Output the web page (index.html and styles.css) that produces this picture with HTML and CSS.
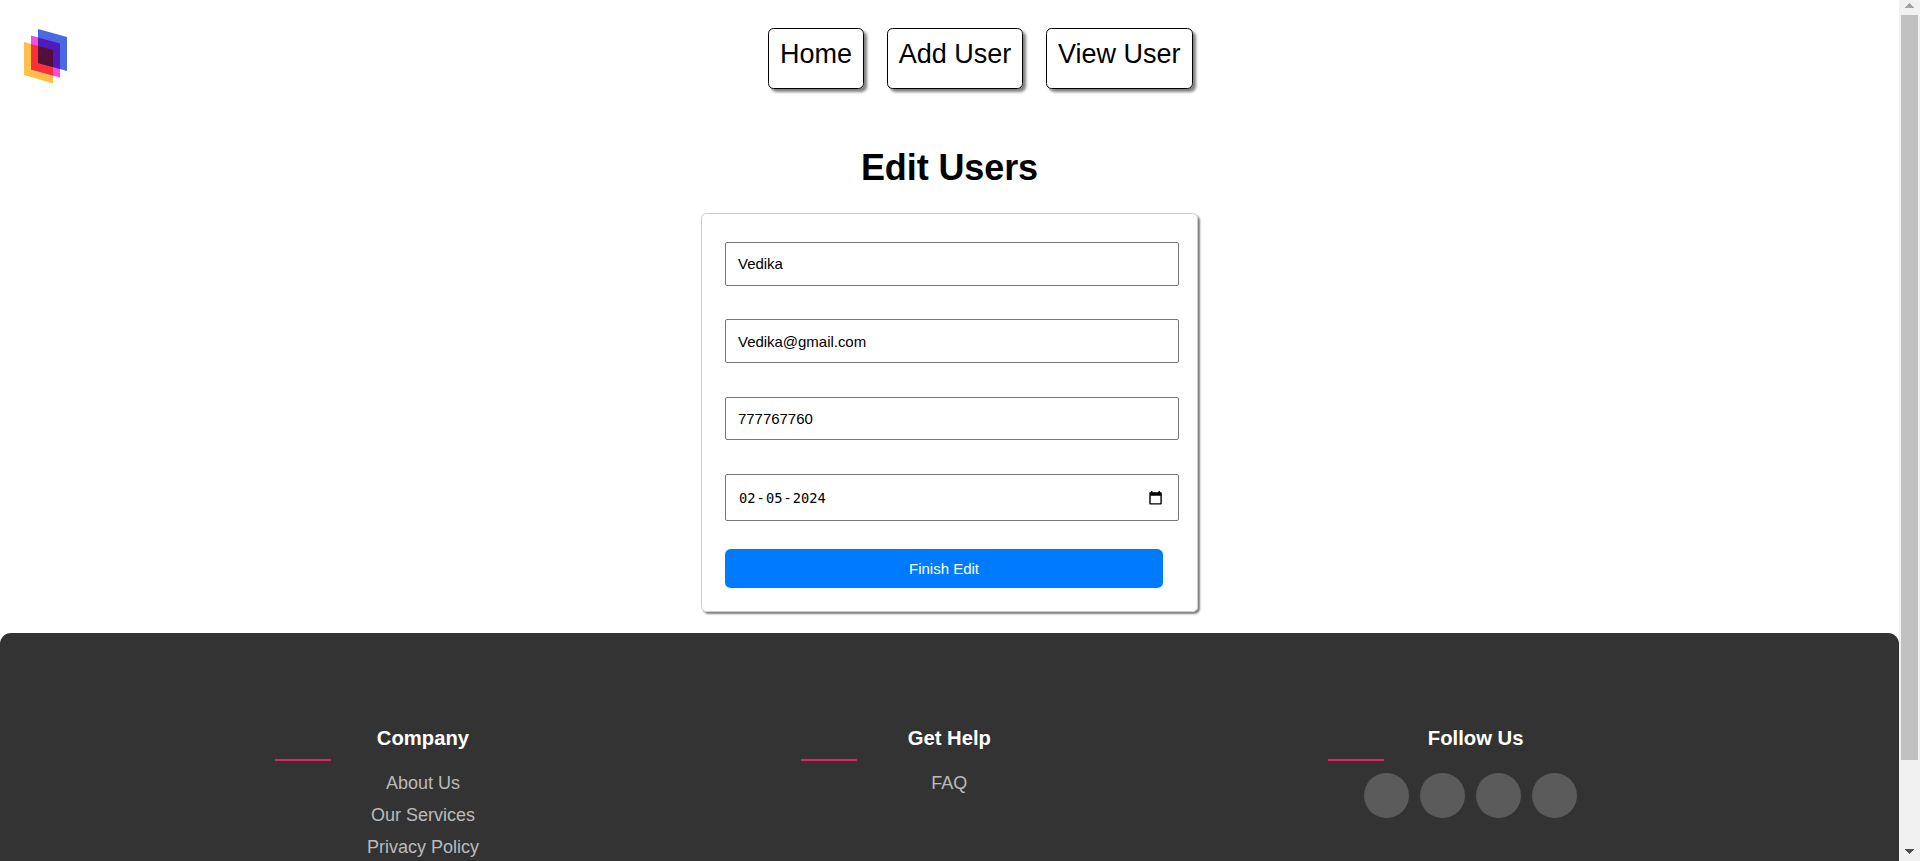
FILE: index.html
```html
<!DOCTYPE html>
<html lang="en">
<head>
<meta charset="utf-8">
<title>Edit Users</title>
<link rel="stylesheet" href="styles.css">
</head>
<body>
<div class="page">
  <header class="header">
    <svg class="logo" width="45" height="56" viewBox="23 28 45 56">
      <path fill="#ffc04a" d="M24 42l29 8v33.5l-29-8.5z"/>
      <path fill="#f84be0" d="M31 35.5l29 8v34l-29-8z"/>
      <path fill="#4a68e2" d="M38 29l29 8v34l-29-8z"/>
      <path fill="#f9303a" d="M31 43.9l22 6.1v25.6l-22-6.1z"/>
      <path fill="#5318b8" d="M38 37.4l22 6.1v25.6l-22-6.1z"/>
      <path fill="#501038" d="M38 45.9l15 4.1v17.1l-15-4.1z"/>
    </svg>
    <nav class="nav">
      <a class="nav-link">Home</a>
      <a class="nav-link">Add User</a>
      <a class="nav-link">View User</a>
    </nav>
  </header>
  <main class="main">
    <h1 class="title">Edit Users</h1>
    <form class="card">
      <div class="field field-name">Vedika</div>
      <div class="field field-email">Vedika@gmail.com</div>
      <div class="field field-phone">777767760</div>
      <div class="field field-date">
        <span class="date"><span>02</span><span class="dash">-</span><span>05</span><span class="dash">-</span><span>2024</span></span>
        <svg width="13" height="14" viewBox="0 0 13 14"><path fill="#000" d="M2 0h1.500v1.300h6V0H11v1.300h1q.8 0 .8.900v10.300q0 1-.9 1H1.200q-.9 0-.9-1V2.200q0-.9.8-.9H2zM1.700 4.700v7.500h9.700V4.700z"/></svg>
      </div>
      <button class="submit" type="button">Finish Edit</button>
    </form>
  </main>
  <footer class="footer">
    <section class="col">
      <h4 class="col-title">Company</h4>
      <a class="link">About Us</a>
      <a class="link">Our Services</a>
      <a class="link">Privacy Policy</a>
    </section>
    <section class="col">
      <h4 class="col-title">Get Help</h4>
      <a class="link">FAQ</a>
    </section>
    <section class="col">
      <h4 class="col-title">Follow Us</h4>
      <div class="social"><i class="dot"></i><i class="dot"></i><i class="dot"></i><i class="dot"></i></div>
    </section>
  </footer>
</div>
<aside class="scrollbar">
  <svg class="arrow" width="9" height="5" viewBox="0 0 9 5" shape-rendering="crispEdges"><path fill="#a3a3a3" d="M4 0h1v1h1v1h1v1h1v1h1v1H0V4h1V3h1V2h1V1h1z"/></svg>
  <div class="thumb"></div>
  <svg class="arrow arrow-down" width="9" height="5" viewBox="0 0 9 5" shape-rendering="crispEdges"><path fill="#505050" d="M0 0h9v1H8v1H7v1H6v1H5v1H4V4H3V3H2V2H1V1H0z"/></svg>
</aside>
</body>
</html>
```
FILE: styles.css
```css
* { box-sizing: border-box; }
body {
  margin: 0;
  height: 861px;
  overflow: hidden;
  display: flex;
  background: #fff;
  color: #000;
  font-family: "Liberation Sans", Arial, sans-serif;
}
.page { width: 1899px; height: 861px; overflow: hidden; display: flex; flex-direction: column; }
.header { height: 117px; padding: 28px 0 0 23px; display: flex; align-items: flex-start; flex: none; }
.logo { flex: none; }
.nav { display: flex; gap: 22.500px; margin-left: 700px; }
.nav-link {
  height: 61px;
  padding: 10px 11.100px 0;
  border: 1px solid #000;
  border-radius: 5.600px;
  box-shadow: 3px 3px 3px #808080;
  font-size: 27px;
  line-height: 31px;
  white-space: nowrap;
}
.main { height: 516px; flex: none; display: flex; flex-direction: column; align-items: center; }
.title { margin: 30px 0 25px; font-size: 36px; line-height: 41px; letter-spacing: -0.1px; }
.card {
  width: 497px;
  height: 399px;
  padding: 28px 18px 0 23px;
  border: 1px solid #ccc;
  border-radius: 5.600px;
  box-shadow: 2px 2px 2px #808080;
  display: flex;
  flex-direction: column;
}
.field {
  height: 44px;
  margin-bottom: 33px;
  padding: 0 12px;
  border: 1px solid #767676;
  border-radius: 2px;
  display: flex;
  align-items: center;
  font-size: 15px;
  letter-spacing: -0.03px;
  flex: none;
}
.field-name { padding-bottom: 1px; }
.field-email { padding-top: 1px; }
.field-phone { height: 43px; margin-top: 1px; margin-bottom: 34px; }
.field-date { height: 47px; margin-bottom: 28px; padding: 0 16px 0 13px; justify-content: space-between; }
.date { display: flex; font: 13.700px "DejaVu Sans Mono", monospace; letter-spacing: 0; }
.dash { padding: 0 1.100px; }
.submit {
  width: 438px;
  height: 39px;
  padding: 0;
  border: 0;
  border-radius: 5.600px;
  background: #007bff;
  color: #fff;
  font: 15px "Liberation Sans", Arial, sans-serif;
}
.footer {
  flex: 1;
  padding: 93px 275.400px 0 275px;
  border-radius: 11px 11px 0 0;
  background: #333;
  display: flex;
  justify-content: space-between;
}
.col { width: 296px; display: flex; flex-direction: column; align-items: center; }
.col-title {
  width: 100%;
  height: 35px;
  margin: 0 0 12px;
  color: #fff;
  font-size: 20.250px;
  line-height: 24px;
  text-align: center;
  background: linear-gradient(#e91e63, #e91e63) left bottom / 56px 2px no-repeat;
}
.link { height: 32px; color: #bbb; font-size: 18px; line-height: 20px; }
.social { display: flex; gap: 11px; margin-right: 11px; }
.dot { width: 45px; height: 45px; border-radius: 50%; background: rgba(255, 255, 255, 0.2); }
.scrollbar {
  width: 21px;
  padding: 3px 2px 7px;
  background: #f1f1f1;
  display: flex;
  flex-direction: column;
  align-items: center;
}
.arrow { flex: none; }
.thumb { width: 17px; height: 745px; margin-top: 7px; background: #c1c1c1; }
.arrow-down { margin-top: auto; }
```
